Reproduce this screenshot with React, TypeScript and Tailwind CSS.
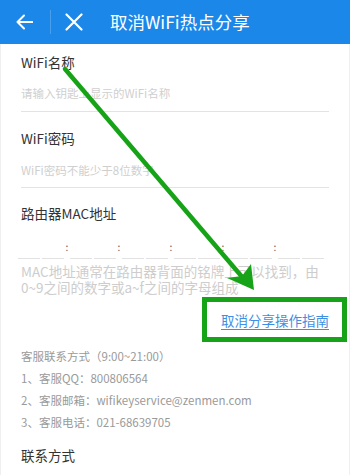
import React from "react";

const font = { fontFamily: '"Noto Sans CJK SC", "Noto Sans", sans-serif' };

function MacRow() {
  const groups = [0, 1, 2, 3, 4, 5];
  return (
    <div className="mt-[10px] flex h-[26px] pl-[17px]">
      {groups.map((g) => (
        <React.Fragment key={g}>
          <div className="flex h-full w-[46px] items-end gap-[2px]">
            <div className="h-full flex-1 border-b border-[#e2e2e2]" />
            <div className="h-full flex-1 border-b border-[#e2e2e2]" />
          </div>
          {g < 5 && (
            <div className="flex h-full w-[6px] items-center justify-center pt-[1px] text-[10px] leading-none text-[#555]">
              :
            </div>
          )}
        </React.Fragment>
      ))}
    </div>
  );
}

export default function App() {
  return (
    <div className="relative h-[475px] w-[350px] overflow-hidden bg-white" style={font}>
      {/* Header */}
      <div className="flex h-[44px] items-center bg-[#1b87e8] pl-[16px] text-white">
        <svg width="17" height="16" viewBox="0 0 17 16" className="shrink-0">
          <path d="M16.5 8H1.5M8 1.5L1.5 8L8 14.5" fill="none" stroke="white" strokeWidth="2" strokeLinecap="round" strokeLinejoin="round" />
        </svg>
        <div className="ml-[17px] h-[24px] w-px bg-white/20" />
        <svg width="18" height="18" viewBox="0 0 18 18" className="ml-[14px] shrink-0">
          <path d="M1.5 1.5L16.5 16.5M16.5 1.5L1.5 16.5" fill="none" stroke="white" strokeWidth="2.2" strokeLinecap="round" />
        </svg>
        <div className="ml-[27px] text-[17.5px] leading-[20px]">取消WiFi热点分享</div>
      </div>

      <div className="border-x border-[#efefef]">
        {/* WiFi name */}
        <div className="px-[20px] pt-[8px]">
          <div className="text-[13.5px] leading-[20px] text-[#333]">WiFi名称</div>
          <div className="mt-[11px] text-[11.5px] leading-[20px] text-[#cfcfcf]">请输入钥匙上显示的WiFi名称</div>
          <div className="mt-[8px] h-px bg-[#e3e3e3]" />
        </div>

        {/* WiFi password */}
        <div className="px-[20px] pt-[16px]">
          <div className="text-[13.5px] leading-[20px] text-[#333]">WiFi密码</div>
          <div className="mt-[12px] text-[11.5px] leading-[20px] text-[#cfcfcf]">WiFi密码不能少于8位数字</div>
          <div className="mt-[7px] h-px bg-[#e3e3e3]" />
        </div>

        {/* MAC */}
        <div className="pt-[15px]">
          <div className="px-[20px] text-[13.5px] leading-[20px] text-[#333]">路由器MAC地址</div>
          <MacRow />
          <div className="mt-[4px] px-[20px] text-[13.5px] leading-[16px] text-[#cdcdcd]">
            MAC地址通常在路由器背面的铭牌上可以找到，由0~9之间的数字或a~f之间的字母组成
          </div>
        </div>

        {/* Link */}
        <div className="mt-[15px] flex justify-end pr-[20px]">
          <span className="text-[13.5px] leading-[20px] text-[#3d8fe3] underline underline-offset-[3px]">取消分享操作指南</span>
        </div>

        {/* Service */}
        <div className="mt-[15px] px-[20px] text-[11.5px] leading-[22px] text-[#9a9a9a]">
          <div>客服联系方式（9:00~21:00）</div>
          <div>1、客服QQ：800806564</div>
          <div>2、客服邮箱：wifikeyservice@zenmen.com</div>
          <div>3、客服电话：021-68639705</div>
        </div>

        <div className="mt-[12px] px-[20px] pb-[20px] text-[13.5px] leading-[20px] text-[#333]">联系方式</div>
      </div>

      {/* Green annotation overlay */}
      <svg className="pointer-events-none absolute left-0 top-0" width="350" height="475" viewBox="0 0 350 475">
        <line x1="65" y1="69" x2="243" y2="278" stroke="#17a317" strokeWidth="4.5" strokeLinecap="round" />
        <polygon points="254,290 227,278 242,276 251,264" fill="#17a317" />
        <rect x="204.5" y="299.5" width="140" height="40" fill="none" stroke="#17a317" strokeWidth="5" />
      </svg>
    </div>
  );
}
